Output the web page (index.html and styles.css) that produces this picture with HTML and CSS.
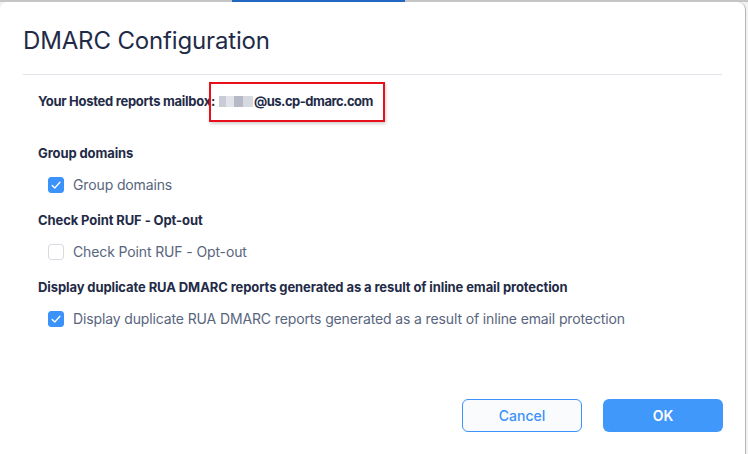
FILE: index.html
```html
<!DOCTYPE html>
<html lang="en">
  <head>
    <meta charset="UTF-8" />
    <meta name="viewport" content="width=device-width, initial-scale=1.0" />
    <title>DMARC Configuration</title>
    <link rel="stylesheet" href="styles.css">
  </head>
  <body>
    <div class="tabstrip"><span class="tabstrip__active"></span></div>
    <div class="dialog">
      <h1 class="dialog__title">DMARC Configuration</h1>
      <div class="dialog__body">
        <div class="mailbox">
          <span class="mailbox__label">Your Hosted reports mailbox:</span>
          <span class="mailbox__value">
            <span class="mailbox__mask"></span>@us.cp-dmarc.com
          </span>
        </div>

        <div class="field">
          <div class="field__title">Group domains</div>
          <label class="check">
            <span class="check__box check__box--on">
              <svg viewBox="0 0 16 16" width="16" height="16"><path d="M4.2 8.4 L6.9 10.9 L11.9 5.3" fill="none" stroke="#fff" stroke-width="1.4" stroke-linecap="round" stroke-linejoin="round"/></svg>
            </span>
            Group domains
          </label>
        </div>

        <div class="field">
          <div class="field__title">Check Point RUF - Opt-out</div>
          <label class="check">
            <span class="check__box"></span>
            Check Point RUF - Opt-out
          </label>
        </div>

        <div class="field">
          <div class="field__title">Display duplicate RUA DMARC reports generated as a result of inline email protection</div>
          <label class="check">
            <span class="check__box check__box--on">
              <svg viewBox="0 0 16 16" width="16" height="16"><path d="M4.2 8.4 L6.9 10.9 L11.9 5.3" fill="none" stroke="#fff" stroke-width="1.4" stroke-linecap="round" stroke-linejoin="round"/></svg>
            </span>
            Display duplicate RUA DMARC reports generated as a result of inline email protection
          </label>
        </div>
      </div>
      <div class="dialog__footer">
        <button class="btn btn--ghost" type="button">Cancel</button>
        <button class="btn btn--primary" type="button">OK</button>
      </div>
    </div>
  </body>
</html>
```

FILE: styles.css
```css
* {
  box-sizing: border-box;
  margin: 0;
  padding: 0;
}
:root {
  --ink: hsl(222, 40%, 20%);
  --ink-soft: hsl(220, 18%, 42%);
  --blue: hsl(213, 96%, 61%);
  --line: hsl(230, 18%, 90%);
}
body {
  background: #f2f2f2;
  font-family: Inter, "Noto Sans", sans-serif;
  color: var(--ink);
  height: 100vh;
  overflow: hidden;
}
.tabstrip {
  height: 2px;
  background: #c6c6c6;
  display: flex;
}
.tabstrip__active {
  margin-left: 232px;
  width: 173px;
  background: hsl(214, 70%, 45%);
}
.dialog {
  background: #fff;
  height: 452px;
  margin-right: 2px;
  border-right: 1px solid #b5b5b5;
  border-radius: 8px 8px 0 0;
  display: flex;
  flex-direction: column;
}
.dialog__title {
  font-size: 24px;
  font-weight: 400;
  line-height: 30px;
  margin: 24px 23px 0;
  padding-bottom: 18px;
  border-bottom: 1px solid var(--line);
  letter-spacing: -0.15px;
}
.dialog__body {
  padding: 16px 38px 0;
  flex: 1;
}
.mailbox {
  display: flex;
  align-items: center;
  font-size: 13px;
  font-weight: 700;
  line-height: 20px;
  letter-spacing: -0.28px;
}
.mailbox__value {
  position: relative;
  display: inline-flex;
  align-items: center;
  margin-left: 4px;
  letter-spacing: -0.5px;
}
/* red highlight frame sits over the address */
.mailbox__value::before {
  content: "";
  position: absolute;
  left: -10px;
  right: -12px;
  top: -9px;
  bottom: -11px;
  border: 2px solid #e8101a;
  box-shadow: 1px 2px 3px rgba(0, 0, 0, 0.18);
}
.mailbox__mask {
  display: inline-block;
  width: 34px;
  height: 11px;
  margin-right: 1px;
  background: linear-gradient(90deg, #c9ccd6 0 22%, #e2e4ea 22% 44%, #b6bac6 44% 70%, #d6d9e0 70%);
  filter: blur(0.6px);
}
.field {
  margin-top: 32px;
}
.field + .field {
  margin-top: 15px;
}
.field__title {
  font-size: 13px;
  font-weight: 700;
  line-height: 20px;
  letter-spacing: -0.1px;
}
.check {
  display: flex;
  align-items: center;
  gap: 9px;
  margin-top: 12px;
  padding-left: 10px;
  font-size: 14px;
  color: var(--ink-soft);
  line-height: 20px;
  letter-spacing: -0.13px;
}
.check__box {
  width: 16px;
  height: 16px;
  border-radius: 3px;
  border: 1px solid #d8dbe0;
  background: #fff;
  display: flex;
}
.check__box--on {
  background: var(--blue);
  border-color: var(--blue);
}
.check__box--on svg {
  margin: -1px;
}
.dialog__footer {
  display: flex;
  justify-content: flex-end;
  gap: 21px;
  padding: 0 22px 22px;
}
.btn {
  width: 120px;
  height: 33px;
  border-radius: 6px;
  font: 500 14px Inter, "Noto Sans", sans-serif;
}
.btn--ghost {
  background: #fafbfc;
  border: 1px solid var(--blue);
  color: var(--blue);
}
.btn--primary {
  background: hsl(212, 96%, 62%);
  border: 0;
  color: #fff;
  font-weight: 600;
}
```
